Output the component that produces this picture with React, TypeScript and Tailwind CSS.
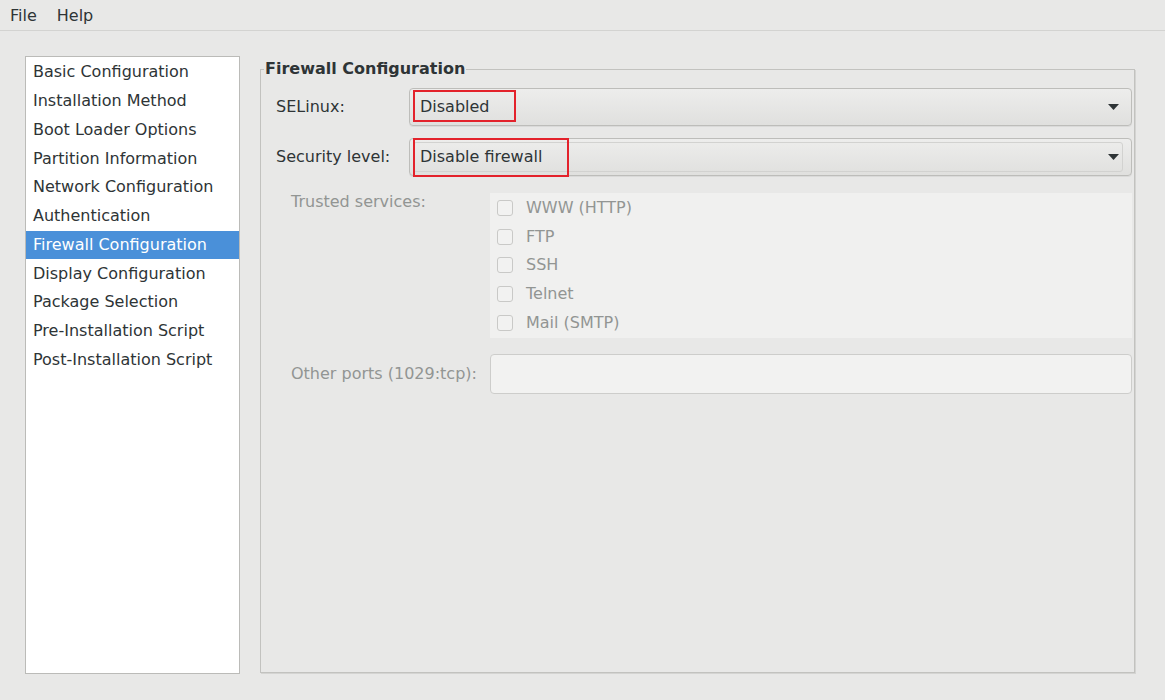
const sections = [
  "Basic Configuration",
  "Installation Method",
  "Boot Loader Options",
  "Partition Information",
  "Network Configuration",
  "Authentication",
  "Firewall Configuration",
  "Display Configuration",
  "Package Selection",
  "Pre-Installation Script",
  "Post-Installation Script",
];

const services = ["WWW (HTTP)", "FTP", "SSH", "Telnet", "Mail (SMTP)"];

function Arrow() {
  return (
    <svg width="11" height="6" viewBox="0 0 11 6" className="shrink-0">
      <path d="M0 0 L11 0 L5.5 6 Z" fill="#2e3436" />
    </svg>
  );
}

function Combo({ value, inner, markWidth, markTop, markHeight }: { value: string; inner?: boolean; markWidth: number; markTop: number; markHeight: number }) {
  return (
    <div className="relative flex-1 h-[38px] rounded-[4px] border border-[#bdbdba] bg-gradient-to-b from-[#ededec] to-[#e0e0de] shadow-[0_1px_0_rgba(0,0,0,0.06)]">
      {inner ? (
        <div className="absolute inset-[3px] right-[8px] rounded-[3px] border border-[#d2d2d0]" />
      ) : null}
      <div className="relative flex h-full items-center pl-[10px] pr-[12px]">
        <span className="flex-1">{value}</span>
        <Arrow />
      </div>
      {/* annotation box */}
      <div
        className="absolute left-[3px] border-2 border-[#e3222b]"
        style={{ width: markWidth, top: markTop, height: markHeight }}
      />
    </div>
  );
}

export default function App() {
  return (
    <div
      className="w-[1165px] h-[700px] bg-[#e8e8e7] text-[#2e3436] text-[16px] overflow-hidden"
      style={{ fontFamily: '"DejaVu Sans", sans-serif' }}
    >
      {/* Menu bar */}
      <div className="flex h-[31px] items-center border-b border-[#d3d3d1] pt-[1px]">
        <span className="px-[10px]">File</span>
        <span className="px-[10px]">Help</span>
      </div>

      <div className="flex gap-[20px] pl-[25px] pt-[25px]">
        {/* Section list */}
        <div className="w-[215px] h-[618px] shrink-0 border border-[#bbbbb8] bg-white pt-[1px]">
          {sections.map((s) => (
            <div
              key={s}
              className={
                s === "Firewall Configuration"
                  ? "flex h-[28.75px] items-center pl-[7px] bg-[#4a90d9] text-white"
                  : "flex h-[28.75px] items-center pl-[7px]"
              }
            >
              {s}
            </div>
          ))}
        </div>

        {/* Firewall frame */}
        <fieldset className="mt-[1px] w-[875px] h-[616px] border border-[#c2c2bf] shadow-[1px_1px_0_#d4d4d2]">
          <legend className="ml-[3px] px-[1px] font-bold">Firewall Configuration</legend>

          <div className="flex flex-col pt-[7px] pr-[2px]">
            <div className="flex items-center">
              <span className="w-[148px] pl-[15px] shrink-0">SELinux:</span>
              <Combo value="Disabled" markWidth={103} markTop={1} markHeight={32} />
            </div>
            <div className="mt-[12px] flex items-center">
              <span className="w-[148px] pl-[15px] shrink-0">Security level:</span>
              <Combo value="Disable firewall" inner markWidth={156} markTop={-1} markHeight={39} />
            </div>

            <div className="mt-[17px] flex items-start text-[#929593]">
              <span className="w-[229px] pl-[30px] leading-[18px] shrink-0">Trusted services:</span>
              <div className="flex-1 h-[145px] bg-[#f0f0ef] pt-[1px]">
                {services.map((s) => (
                  <div key={s} className="flex h-[28.6px] items-center pl-[7px]">
                    <div className="w-[16px] h-[16px] rounded-[3px] border border-[#c9c9c7] bg-[#f2f2f1]" />
                    <span className="ml-[13px]">{s}</span>
                  </div>
                ))}
              </div>
            </div>

            <div className="mt-[16px] flex items-center text-[#929593]">
              <span className="w-[229px] pl-[30px] shrink-0">Other ports (1029:tcp):</span>
              <div className="flex-1 h-[40px] rounded-[4px] border border-[#cdcdcb] bg-[#f2f2f1]" />
            </div>
          </div>
        </fieldset>
      </div>
    </div>
  );
}
